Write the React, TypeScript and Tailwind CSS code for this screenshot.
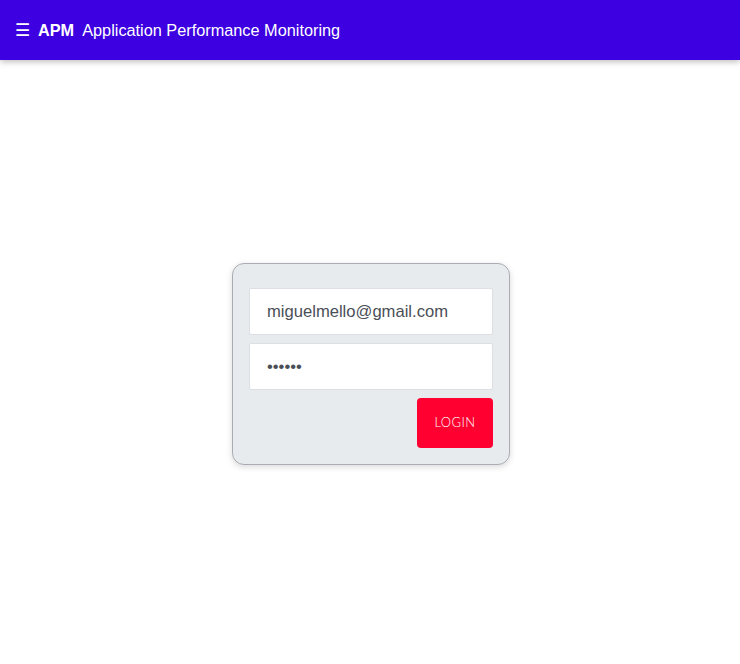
import React, { useState } from 'react';

const Header: React.FC = () => (
  <header className="relative z-10 h-[60px] bg-[#3d00e0] shadow-[0_2px_6px_rgba(0,0,0,0.25)] flex items-center px-[15px] text-white font-['Liberation_Sans',Arial,sans-serif]">
    <span className="text-[17px] leading-none mr-[8px]">☰</span>
    <span className="text-[16.3px] font-bold mr-[8px]">APM</span>
    <span className="text-[16.3px]">Application Performance Monitoring</span>
  </header>
);

const App: React.FC = () => {
  const [email, setEmail] = useState('miguelmello@gmail.com');
  const [password, setPassword] = useState('123456');

  return (
    <div className="min-h-[664px] flex flex-col bg-white">
      <Header />
      <main className="flex-1 flex items-center justify-center pt-[4px] pl-[2px]">
        <form
          onSubmit={(e) => e.preventDefault()}
          className="w-[278px] bg-[#e8ebee] border border-[#a9adb3] rounded-[12px] shadow-[0_2px_6px_rgba(0,0,0,0.15)] px-4 pt-6 pb-4 flex flex-col gap-2"
        >
          <input
            type="email"
            value={email}
            onChange={(e) => setEmail(e.target.value)}
            className="h-[47px] w-full bg-white border border-[#dcdfe3] rounded-[2px] px-[17px] text-[16.6px] text-[#4a4f57] font-['Liberation_Sans',Arial,sans-serif] outline-none"
          />
          <input
            type="password"
            value={password}
            onChange={(e) => setPassword(e.target.value)}
            className="h-[47px] w-full bg-white border border-[#dcdfe3] rounded-[2px] px-[17px] text-[16.6px] text-[#4a4f57] font-['Liberation_Sans',Arial,sans-serif] outline-none"
          />
          <div className="flex justify-end">
            <button
              type="submit"
              className="w-[76px] h-[50px] bg-[#ff0030] text-white rounded-[4px] text-[13px] font-light uppercase tracking-[0.4px] font-['Lato',sans-serif]"
            >
              Login
            </button>
          </div>
        </form>
      </main>
    </div>
  );
};

export default App;
